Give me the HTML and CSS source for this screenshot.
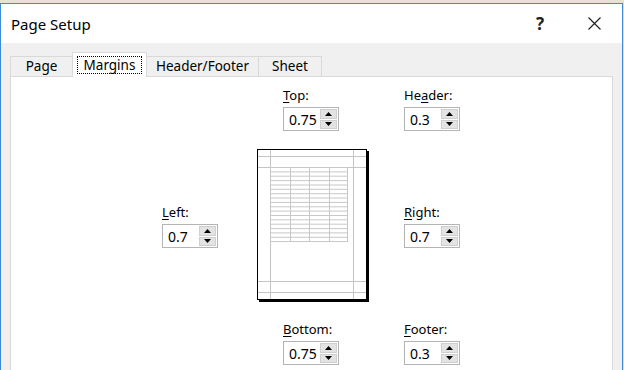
FILE: index.html
```html
<!DOCTYPE html>
<html lang="en">
<head>
    <meta charset="UTF-8">
    <title>Page Setup</title>
    <link rel="stylesheet" href="styles.css">
</head>
<body>
    <div class="dialog">
        <div class="title-bar">
            <span class="title">Page Setup</span>
            <span class="help">?</span>
            <svg class="close" width="13" height="13" viewBox="0 0 13 13">
                <path d="M0.5 0.5L12.5 12.5M12.5 0.5L0.5 12.5" stroke="#222" stroke-width="1.2" fill="none"/>
            </svg>
        </div>

        <div class="dialog-body">
            <div class="tabs">
                <div class="tab tab-page">Page</div>
                <div class="tab tab-margins active"><span class="focus">Margins</span></div>
                <div class="tab tab-header">Header/Footer</div>
                <div class="tab tab-sheet">Sheet</div>
            </div>

            <div class="panel">
                <div class="margins-grid">
                    <!-- 上边距 / 页眉 -->
                    <div class="field field-top">
                        <label class="field-label"><u>T</u>op:</label>
                        <div class="spinner">
                            <span class="spinner-value">0.75</span>
                            <div class="spin-buttons">
                                <span class="spin-btn"><svg width="7" height="4" viewBox="0 0 7 4"><polygon points="3.5,0 7,4 0,4" fill="#000"/></svg></span>
                                <span class="spin-btn"><svg width="7" height="4" viewBox="0 0 7 4"><polygon points="0,0 7,0 3.5,4" fill="#000"/></svg></span>
                            </div>
                        </div>
                    </div>
                    <div class="field field-right-col">
                        <label class="field-label">He<u>a</u>der:</label>
                        <div class="spinner">
                            <span class="spinner-value">0.3</span>
                            <div class="spin-buttons">
                                <span class="spin-btn"><svg width="7" height="4" viewBox="0 0 7 4"><polygon points="3.5,0 7,4 0,4" fill="#000"/></svg></span>
                                <span class="spin-btn"><svg width="7" height="4" viewBox="0 0 7 4"><polygon points="0,0 7,0 3.5,4" fill="#000"/></svg></span>
                            </div>
                        </div>
                    </div>

                    <!-- 左边距 / 预览 / 右边距 -->
                    <div class="field field-left field-middle">
                        <label class="field-label"><u>L</u>eft:</label>
                        <div class="spinner">
                            <span class="spinner-value">0.7</span>
                            <div class="spin-buttons">
                                <span class="spin-btn"><svg width="7" height="4" viewBox="0 0 7 4"><polygon points="3.5,0 7,4 0,4" fill="#000"/></svg></span>
                                <span class="spin-btn"><svg width="7" height="4" viewBox="0 0 7 4"><polygon points="0,0 7,0 3.5,4" fill="#000"/></svg></span>
                            </div>
                        </div>
                    </div>
                    <div class="preview">
                        <svg width="114" height="154" viewBox="0 0 114 154">
                            <!-- 页面阴影 -->
                            <path d="M111 2V152.5M2 152H112" stroke="#000" stroke-width="2" fill="none"/>
                            <rect x="0.5" y="0.5" width="109" height="150" fill="#fff" stroke="#000"/>
                            <!-- 页边距线 -->
                            <g stroke="#c4c4c4" stroke-width="1">
                                <path d="M13.5 1V150M96.5 1V150"/>
                                <path d="M1 7.5H109M1 18.5H109M1 132.5H109M1 143.5H109"/>
                            </g>
                            <!-- 表格 -->
                            <g stroke="#c8c8c8" stroke-width="1" fill="none">
                                <rect x="13.5" y="18.5" width="77" height="74"/>
                                <path d="M33.5 18.5V92.5M52.5 18.5V92.5M72.5 18.5V92.5"/>
                                <path d="M13.5 22.9H90.5M13.5 27.2H90.5M13.5 31.6H90.5M13.5 36H90.5M13.5 40.3H90.5M13.5 44.7H90.5M13.5 49H90.5M13.5 53.4H90.5M13.5 57.8H90.5M13.5 62.1H90.5M13.5 66.5H90.5M13.5 70.8H90.5M13.5 75.2H90.5M13.5 79.6H90.5M13.5 83.9H90.5M13.5 88.3H90.5"/>
                            </g>
                        </svg>
                    </div>
                    <div class="field field-right-col field-middle">
                        <label class="field-label"><u>R</u>ight:</label>
                        <div class="spinner">
                            <span class="spinner-value">0.7</span>
                            <div class="spin-buttons">
                                <span class="spin-btn"><svg width="7" height="4" viewBox="0 0 7 4"><polygon points="3.5,0 7,4 0,4" fill="#000"/></svg></span>
                                <span class="spin-btn"><svg width="7" height="4" viewBox="0 0 7 4"><polygon points="0,0 7,0 3.5,4" fill="#000"/></svg></span>
                            </div>
                        </div>
                    </div>

                    <!-- 下边距 / 页脚 -->
                    <div class="field field-top">
                        <label class="field-label"><u>B</u>ottom:</label>
                        <div class="spinner">
                            <span class="spinner-value">0.75</span>
                            <div class="spin-buttons">
                                <span class="spin-btn"><svg width="7" height="4" viewBox="0 0 7 4"><polygon points="3.5,0 7,4 0,4" fill="#000"/></svg></span>
                                <span class="spin-btn"><svg width="7" height="4" viewBox="0 0 7 4"><polygon points="0,0 7,0 3.5,4" fill="#000"/></svg></span>
                            </div>
                        </div>
                    </div>
                    <div class="field field-right-col">
                        <label class="field-label"><u>F</u>ooter:</label>
                        <div class="spinner">
                            <span class="spinner-value">0.3</span>
                            <div class="spin-buttons">
                                <span class="spin-btn"><svg width="7" height="4" viewBox="0 0 7 4"><polygon points="3.5,0 7,4 0,4" fill="#000"/></svg></span>
                                <span class="spin-btn"><svg width="7" height="4" viewBox="0 0 7 4"><polygon points="0,0 7,0 3.5,4" fill="#000"/></svg></span>
                            </div>
                        </div>
                    </div>
                </div>
            </div>
        </div>
    </div>
</body>
</html>
```

FILE: styles.css
```css
body {
    margin: 0;
    padding: 3px 0 0 0;
    font-family: "Noto Sans", "Liberation Sans", sans-serif;
    color: #000;
    background-color: #e6e2da;
    height: 370px;
    overflow: hidden;
    box-sizing: border-box;
}

.dialog {
    width: 623px;
    height: 400px;
    box-sizing: border-box;
    border: 1px solid #3c8ad8;
    border-bottom: none;
    background-color: #f0f0f0;
}

.title-bar {
    height: 39px;
    background-color: #fff;
    display: flex;
    align-items: center;
    padding: 0 21px 0 10px;
}

.title {
    font-size: 15px;
    flex: 1;
}

.help {
    font-size: 17px;
    font-weight: bold;
    color: #222;
    margin-right: 44px;
}

.dialog-body {
    padding: 9px 9px 0 9px;
}

.tabs {
    display: flex;
    align-items: flex-end;
    height: 24px;
    position: relative;
    z-index: 1;
}

.tab {
    box-sizing: border-box;
    font-size: 13.5px;
    height: 20px;
    line-height: 19px;
    text-align: center;
    border: 1px solid #d9d9d9;
    border-bottom: none;
    border-right: none;
    background-color: #f0f0f0;
}

.tab-page {
    width: 62px;
}

.tab-margins {
    width: 75px;
}

.tab-header {
    width: 111px;
}

.tab-sheet {
    width: 64px;
    border-right: 1px solid #d9d9d9;
}

.tab.active {
    height: 25px;
    padding-top: 3px;
    line-height: 16px;
    background-color: #fff;
    border-right: 1px solid #d9d9d9;
    margin-bottom: -1px;
}

.tab.active + .tab {
    border-left: none;
}

.focus {
    display: inline-block;
    border: 1px dotted #000;
    line-height: 16px;
    padding: 0 6px;
}

.panel {
    background-color: #fff;
    border: 1px solid #d9d9d9;
    height: 320px;
    padding: 10px 0 0 151px;
}

.margins-grid {
    display: grid;
    grid-template-columns: 95px 147px 1fr;
    row-gap: 18px;
}

.field {
    display: flex;
    flex-direction: column;
    align-items: flex-start;
}

.field-top {
    grid-column: 2;
    margin-left: 26px;
}

.field-right-col {
    grid-column: 3;
}

.field-left {
    grid-column: 1;
}

.field-middle {
    align-self: center;
}

.field-label {
    font-size: 13px;
    line-height: 17px;
    margin-bottom: 3px;
}

.field-label u {
    text-decoration-thickness: 1px;
    text-underline-offset: 2px;
}

.preview {
    grid-column: 2;
    height: 154px;
}

.preview svg {
    display: block;
}

.spinner {
    width: 56px;
    height: 24px;
    box-sizing: border-box;
    border: 1px solid #b4b4b4;
    background-color: #fff;
    display: flex;
    align-items: center;
    padding: 1px;
}

.spinner-value {
    flex: 1;
    font-size: 14px;
    padding-left: 4px;
}

.spin-buttons {
    width: 17px;
    height: 20px;
    display: flex;
    flex-direction: column;
    gap: 1px;
}

.spin-btn {
    flex: 1;
    background-color: #e3e3e3;
    border: 1px solid #cfcfcf;
    display: flex;
    align-items: center;
    justify-content: center;
}

.spin-btn svg {
    display: block;
}
```
